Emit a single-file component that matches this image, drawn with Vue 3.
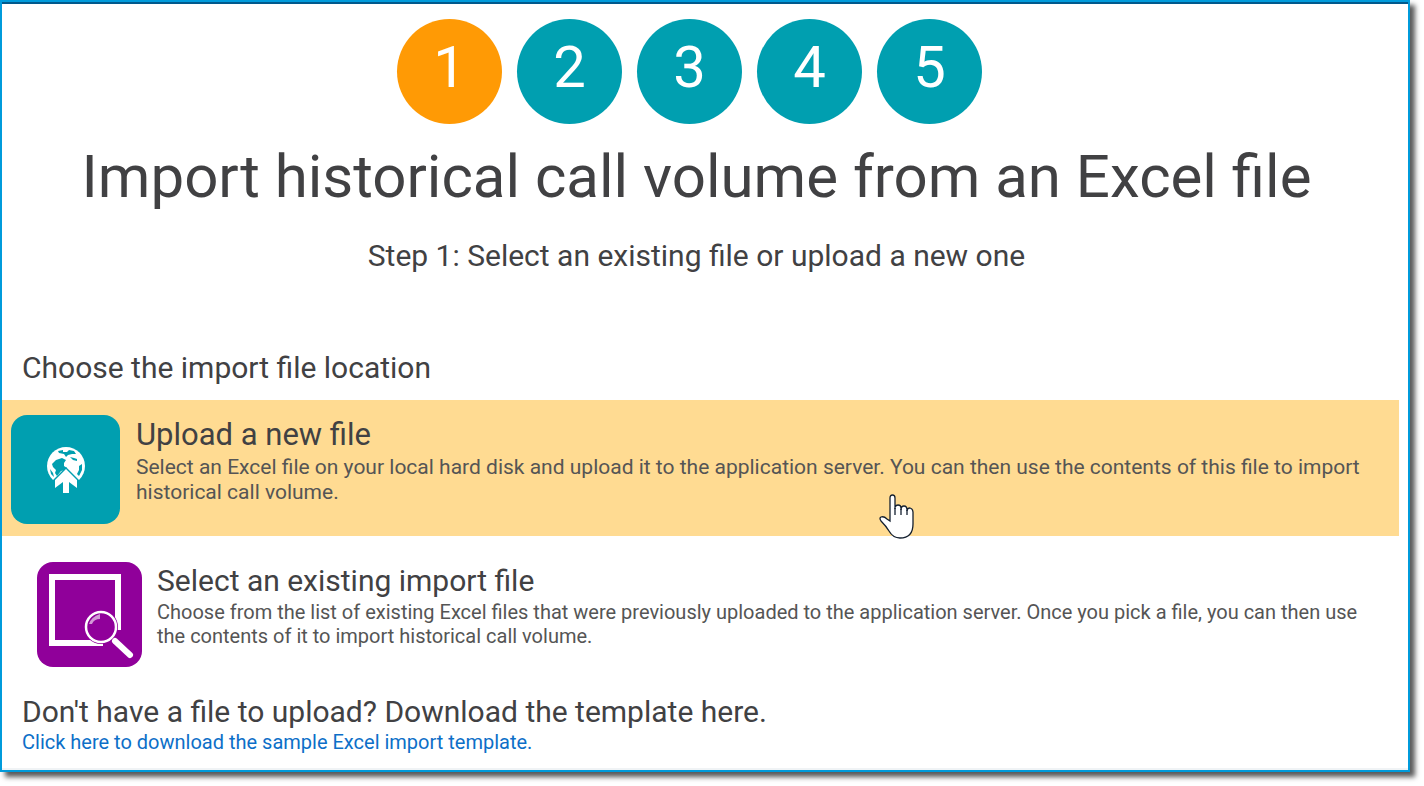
<script setup>
import { ref } from 'vue'

const steps = [1, 2, 3, 4, 5]
const current = ref(1)
</script>

<template>
  <main class="window">
    <header class="intro">
      <nav class="steps" aria-label="Import steps">
        <button
          v-for="n in steps"
          :key="n"
          type="button"
          class="step"
          :class="{ active: n === current }"
          @click="current = n"
        >{{ n }}</button>
      </nav>
      <h1>Import historical call volume from an Excel file</h1>
      <p class="subtitle">Step 1: Select an existing file or upload a new one</p>
    </header>

    <h2 class="section-title">Choose the import file location</h2>

    <button type="button" class="option highlighted">
      <span class="tile teal">
        <svg viewBox="0 0 40 48" width="40" height="48" aria-hidden="true">
          <circle cx="20" cy="20" r="19" fill="#fff" />
          <path d="M12 5 L17 4 L17 6 L21 6 L23 4 L28 5 L30 8 L26 8 L22 9 L20 11 L18 8 L13 7 Z" fill="#009fb0" />
          <path d="M24 11 L28 12 L31 13 L31 15 L27 14 Z" fill="#009fb0" />
          <path d="M6 18 L10 14 L16 12 L20 14 L18 17 L18 20 L21 22 L19 24 L15 25 L11 30 L9 27 L10 24 L7 21 Z" fill="#009fb0" />
          <path d="M36 18 L36 24 L33 30 L31 28 L33 24 L33 20 Z M4 23 L7 27 L8 31 L5 28 Z" fill="#009fb0" />
          <path d="M20 21 L33 34 V44 L25 38 V48 H15 V38 L7 44 V34 Z" fill="#009fb0" />
          <path d="M20 23 L31 34 V42 L23 36 V47 H17 V36 L9 42 V34 Z" fill="#fff" />
        </svg>
      </span>
      <span class="copy">
        <span class="option-title">Upload a new file</span>
        <span class="description">Select an Excel file on your local hard disk and upload it to the application server. You can then use the contents of this file to import historical call volume.</span>
      </span>
      <svg class="pointer" viewBox="0 0 36 46" width="36" height="46" aria-hidden="true">
        <path d="M11 26 V4 Q11 1 13.500 1 Q16 1 16 4 V15 V13 Q17 11 19 11 Q22 11 22 14 V16 Q22 12 25 12 Q28 12 28 16 V17 Q28 14 31 14 Q34 15 34 18 V30 Q34 44 21 44 Q14 44 10 37 Q7 32 2 27 Q0 24 2 23 Q5 22 8 25 L11 27 Z" fill="#fff" stroke="#142030" stroke-width="1.300" />
        <path d="M16 14 V21 M22 15 V21 M28 16 V21" stroke="#142030" stroke-width="1.300" />
      </svg>
    </button>

    <button type="button" class="option existing">
      <span class="tile purple">
        <svg viewBox="0 0 105 105" width="105" height="105" aria-hidden="true">
          <path d="M81 68 V15 H15 V81 H66" fill="none" stroke="#fff" stroke-width="6" />
          <circle cx="64" cy="65" r="17" fill="#90009a" />
          <circle cx="64" cy="65" r="15" fill="none" stroke="#fff" stroke-width="2.500" />
          <path d="M52 62 Q54 55 63 52 V57 Q57 57 55 62 Z" fill="#fff" opacity="0.600" />
          <path d="M78 79 L93 93" stroke="#fff" stroke-width="6" stroke-linecap="round" />
        </svg>
      </span>
      <span class="copy">
        <span class="option-title">Select an existing import file</span>
        <span class="description">Choose from the list of existing Excel files that were previously uploaded to the application server. Once you pick a file, you can then use the contents of it to import historical call volume.</span>
      </span>
    </button>

    <h2 class="section-title template-title">Don't have a file to upload? Download the template here.</h2>
    <a class="template-link" href="#">Click here to download the sample Excel import template.</a>
  </main>
</template>

<style>
body {
  background: #fff;
}
</style>

<style scoped>
.window {
  box-sizing: border-box;
  margin: 0 14px 14px 0;
  padding: 0 9px 16px 0;
  border: 2px solid #009bdb;
  background: #fff;
  box-shadow: inset 0 2px #00598c, inset 0 -2px #f0f3f5, 5px 5px 5px rgba(0, 0, 0, 0.65);
  color: #414143;
  font-family: Roboto, "Liberation Sans", sans-serif;
}
.intro {
  padding: 17px 8px 0 0;
  text-align: center;
}
.steps {
  display: flex;
  justify-content: center;
  gap: 15px;
  margin-right: 14px;
}
.step {
  width: 105px;
  height: 105px;
  padding: 0 0 8px;
  border: 0;
  border-radius: 50%;
  background: #009fb0;
  color: #fff;
  font: 58px/97px Roboto, sans-serif;
}
.step.active {
  background: #ff9a05;
}
h1,
h2,
p {
  margin: 0;
  font-weight: 400;
}
h1 {
  margin-top: 17px;
  font-size: 60px;
  line-height: 72px;
}
.subtitle {
  margin-top: 25px;
  font-size: 30px;
  line-height: 36px;
}
.section-title {
  margin: 76px 20px 0;
  font-size: 30px;
  line-height: 36px;
}
.option {
  position: relative;
  display: flex;
  align-items: flex-start;
  width: 100%;
  border: 0;
  background: none;
  color: inherit;
  font: inherit;
  text-align: left;
  cursor: pointer;
}
.highlighted {
  gap: 16px;
  margin-top: 14px;
  padding: 15px 36px 12px 9px;
  background: #ffdb92;
}
.existing {
  gap: 15px;
  margin-top: 26px;
  padding: 0 35px;
}
.tile {
  display: flex;
  flex: none;
  align-items: center;
  justify-content: center;
  border-radius: 16px;
}
.teal {
  width: 109px;
  height: 109px;
  background: #009fb0;
}
.purple {
  width: 105px;
  height: 105px;
  background: #90009a;
}
.copy {
  flex: 1;
}
.option-title {
  display: block;
  font-size: 30px;
  line-height: 38px;
}
.description {
  display: block;
  color: #555;
  font-size: 20px;
  line-height: 24px;
}
.highlighted .option-title {
  font-size: 31px;
  line-height: 40px;
}
.highlighted .description {
  font-size: 21px;
  line-height: 25px;
}
.pointer {
  position: absolute;
  top: 94px;
  left: 877px;
}
.template-title {
  margin-top: 27px;
}
.template-link {
  display: block;
  margin: 0 20px;
  color: #0d6fc8;
  font-size: 20px;
  line-height: 24px;
  text-decoration: none;
}
</style>
